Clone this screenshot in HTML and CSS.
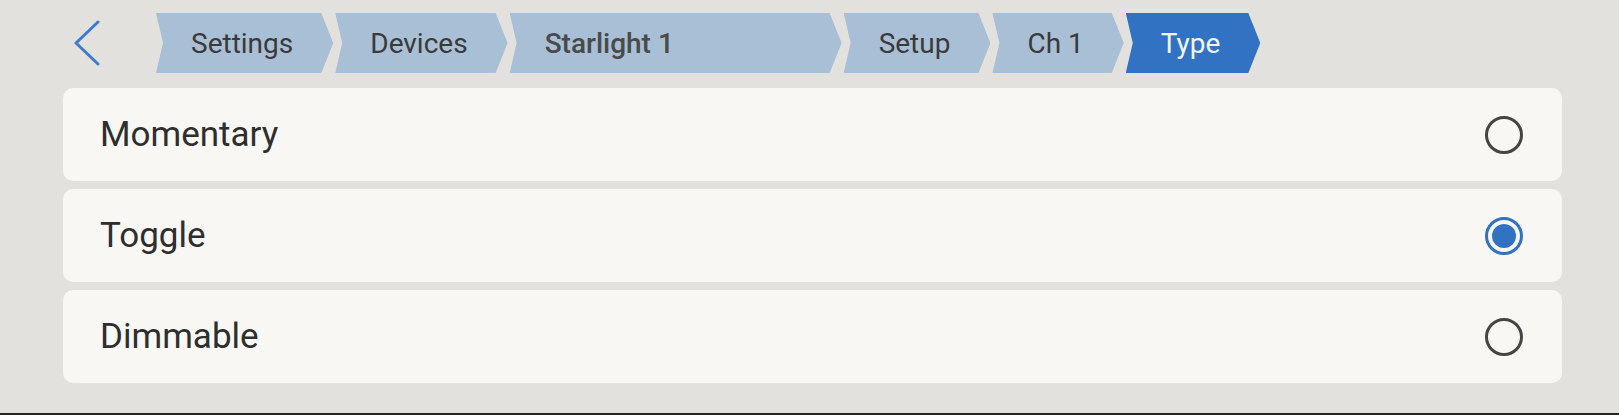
FILE: index.html
```html
<!DOCTYPE html>
<html lang="en">
<head>
    <meta charset="UTF-8">
    <meta name="viewport" content="width=device-width, initial-scale=1.0">
    <title>Channel Type</title>
    <link rel="stylesheet" href="styles.css">
</head>
<body>
    <div class="screen">
        <div class="topbar">
            <button class="back-button" aria-label="Back">
                <svg width="28" height="46" viewBox="0 0 28 46">
                    <polyline points="25,2 3,23 25,44" fill="none" stroke="#3b7bd0" stroke-width="3" stroke-linecap="round" stroke-linejoin="round"/>
                </svg>
            </button>
            <nav class="crumbs">
                <a class="crumb">Settings</a>
                <a class="crumb">Devices</a>
                <a class="crumb crumb-device">Starlight 1</a>
                <a class="crumb">Setup</a>
                <a class="crumb">Ch 1</a>
                <a class="crumb active">Type</a>
            </nav>
        </div>

        <div class="options">
            <label class="option">
                <span>Momentary</span>
                <span class="radio"></span>
            </label>
            <label class="option">
                <span>Toggle</span>
                <span class="radio checked"></span>
            </label>
            <label class="option">
                <span>Dimmable</span>
                <span class="radio"></span>
            </label>
        </div>
    </div>
</body>
</html>
```

FILE: styles.css
```css
:root {
    --page-bg: #e2e1dd;
    --card-bg: #f8f7f3;
    --crumb-bg: #a9bfd5;
    --crumb-active: #3272c2;
    --text-dark: #333333;
    --radio-border: #454545;
    --accent: #3272c2;
}

* {
    margin: 0;
    padding: 0;
    box-sizing: border-box;
}

body {
    background-color: var(--page-bg);
    font-family: Roboto, "Liberation Sans", sans-serif;
    color: var(--text-dark);
    min-height: 100vh;
    border-bottom: 2px solid #222222;
}

.screen {
    padding: 13px 57px 0 63px;
}

/* Top bar with back button and breadcrumbs */
.topbar {
    display: flex;
    align-items: center;
    height: 60px;
}

.back-button {
    width: 93px;
    height: 60px;
    display: flex;
    align-items: center;
    padding-left: 10px;
    background: transparent;
    border: none;
    cursor: pointer;
}

.crumbs {
    display: flex;
    gap: 2px;
    height: 60px;
}

.crumb {
    display: flex;
    align-items: center;
    height: 60px;
    padding: 0 40px 0 35px;
    background-color: var(--crumb-bg);
    color: #3a3a3a;
    font-size: 28px;
    clip-path: polygon(0 0, calc(100% - 12px) 0, 100% 50%, calc(100% - 12px) 100%, 0 100%, 7px 50%);
}

.crumb-device {
    width: 332px;
    font-weight: 500;
    color: #4a4a4a;
}

.crumb.active {
    background-color: var(--crumb-active);
    color: #f2f6fb;
}

/* Option list */
.options {
    display: flex;
    flex-direction: column;
    gap: 8px;
    margin-top: 15px;
}

.option {
    display: flex;
    align-items: center;
    justify-content: space-between;
    height: 93px;
    padding: 0 39px 0 37px;
    background-color: var(--card-bg);
    border-radius: 10px;
    font-size: 35px;
    color: #2e2e2e;
    cursor: pointer;
}

.radio {
    position: relative;
    width: 38px;
    height: 38px;
    border: 3px solid var(--radio-border);
    border-radius: 50%;
}

.radio.checked {
    border-color: var(--accent);
}

.radio.checked::after {
    content: "";
    position: absolute;
    top: 4px;
    left: 4px;
    width: 24px;
    height: 24px;
    border-radius: 50%;
    background-color: var(--accent);
}
```
